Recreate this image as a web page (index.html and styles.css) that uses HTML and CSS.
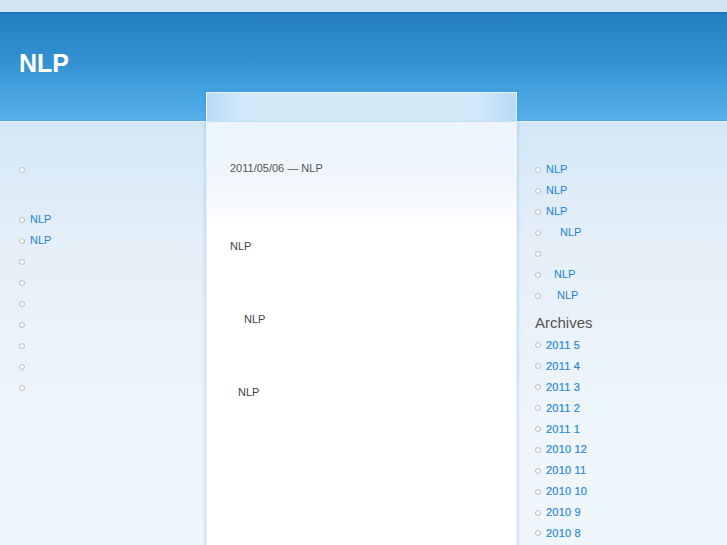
FILE: index.html
```html
<!DOCTYPE html>
<html>
<head>
<meta charset="utf-8">
<link rel="stylesheet" href="styles.css">
</head>
<body>
<div class="topstrip"></div>
<header class="header">
  <h1 class="site-title">NLP</h1>
</header>
<div class="headline"></div>
<div class="layout">
  <aside class="side side-left">
    <ul class="list list-first">
      <li></li>
    </ul>
    <ul class="list">
      <li><a href="#">NLP</a></li>
      <li><a href="#">NLP</a></li>
      <li></li>
      <li></li>
      <li></li>
      <li></li>
      <li></li>
      <li></li>
      <li></li>
    </ul>
  </aside>
  <main class="card">
    <div class="card-top"></div>
    <div class="card-body">
      <p class="meta">2011/05/06 — NLP</p>
      <p class="para p1">NLP</p>
      <p class="para p2">NLP</p>
      <p class="para p3">NLP</p>
    </div>
  </main>
  <aside class="side side-right">
    <ul class="list">
      <li><a href="#">NLP</a></li>
      <li><a href="#">NLP</a></li>
      <li><a href="#">NLP</a></li>
      <li><a href="#" class="in3">NLP</a></li>
      <li></li>
      <li><a href="#" class="in1">NLP</a></li>
      <li><a href="#" class="in2">NLP</a></li>
    </ul>
    <h2 class="widget-title">Archives</h2>
    <ul class="list archives">
      <li><a href="#">2011 5</a></li>
      <li><a href="#">2011 4</a></li>
      <li><a href="#">2011 3</a></li>
      <li><a href="#">2011 2</a></li>
      <li><a href="#">2011 1</a></li>
      <li><a href="#">2010 12</a></li>
      <li><a href="#">2010 11</a></li>
      <li><a href="#">2010 10</a></li>
      <li><a href="#">2010 9</a></li>
      <li><a href="#">2010 8</a></li>
    </ul>
  </aside>
</div>
</body>
</html>
```

FILE: styles.css
```css
html, body {
  margin: 0;
  padding: 0;
}
html {
  overflow: hidden;
}
body {
  font-family: "Liberation Sans", Arial, sans-serif;
  font-size: 11px;
  color: #555;
  background: linear-gradient(to bottom, #d3e5f3 0px, #d3e5f3 121px, #d6e8f5 130px, #e6f0f9 260px, #eef5fb 420px, #eff6fc 545px);
  height: 545px;
  overflow: hidden;
}
.topstrip {
  height: 12px;
  background: #d2e4f2;
  border-bottom: 2px solid #1f6dbf;
}
.header {
  height: 106px;
  background: linear-gradient(to bottom, #2480c0 0%, #3391d1 45%, #4aa6e3 80%, #55b0ec 100%);
  border-bottom: 1px solid #4ea8e6;
  display: flex;
  align-items: flex-start;
}
.headline {
  height: 1px;
  background: #e8f2fb;
}
.site-title {
  margin: 35px 0 0 19px;
  font-size: 25px;
  line-height: 28px;
  font-weight: bold;
  color: #fff;
}
.layout {
  display: grid;
  grid-template-columns: 206px 311px 1fr;
}
.list {
  list-style: none;
  margin: 0;
  padding: 0;
}
.list li {
  display: flex;
  align-items: center;
  height: 21px;
  line-height: 21px;
}
.list li::before {
  content: "";
  width: 4px;
  height: 4px;
  border: 1px solid #bdbdbd;
  border-radius: 50%;
  background: #fbfdff;
  margin-right: 5px;
  flex: none;
}
.list a {
  color: #1f84d0;
  text-decoration: none;
}
.side-left {
  padding: 37px 0 0 19px;
}
.list-first {
  margin-bottom: 29px;
}
.card {
  margin-top: -30px;
  position: relative;
  border: 1px solid #eaf4fd;
  border-bottom: none;
  box-shadow: 0 0 4px rgba(40, 120, 200, 0.35);
  background: #fff;
}
.card-top {
  height: 28px;
  background: linear-gradient(to right, #b9dbf5 0px, #d2e8f8 35px, #d4e9f8 50%, #d2e8f8 270px, #b9daf4 100%);
  border-bottom: 1px solid #c6def2;
}
.card-body {
  background: linear-gradient(to bottom, #edf4fb 0px, #eef5fb 45px, #f6f9fd 80px, #ffffff 105px);
  padding: 36px 0 0 23px;
  height: 390px;
}
.meta {
  margin: 0;
  line-height: 20px;
  color: #555;
}
.para {
  margin: 0;
  line-height: 20px;
  color: #444;
}
.p1 { margin-top: 58px; }
.p2 { margin-top: 53px; padding-left: 14px; }
.p3 { margin-top: 53px; padding-left: 8px; }
.side-right {
  padding: 37px 0 0 18px;
}
.in1 { padding-left: 8px; }
.in2 { padding-left: 11px; }
.in3 { padding-left: 14px; }
.widget-title {
  margin: 6px 0 1px 0;
  font-size: 15px;
  font-weight: normal;
  line-height: 22px;
  color: #555;
}
.archives li {
  height: 20.9px;
  line-height: 20.9px;
}
.archives a {
  font-weight: normal;
  letter-spacing: 0.2px;
  -webkit-text-stroke: 0.2px #2a8ad4;
  color: #2a8ad4;
}
```
